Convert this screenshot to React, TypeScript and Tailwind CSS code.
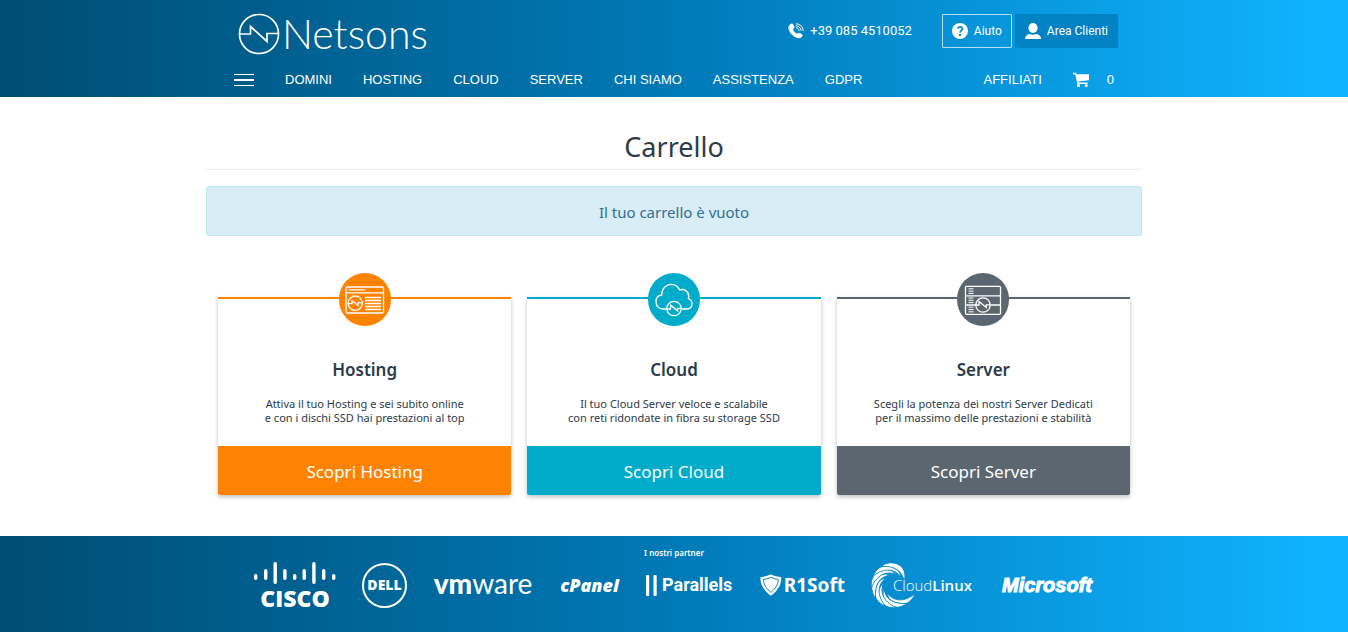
import type { ReactNode } from "react";

const BAND = "bg-[linear-gradient(to_right,#004d73_0%,#007ab8_51%,#10b3ff_98%,#10b3ff_100%)]";

function BrandLogo() {
  return (
    <a href="#home" aria-label="Netsons" className="flex items-center gap-0.5 pt-1.5 pl-2">
      <svg className="size-[42px]" viewBox="0 0 42 42" fill="none" stroke="#fff" strokeWidth="1.7" aria-hidden="true">
        <circle cx="21" cy="21" r="19.500" />
        <path d="M1.500 21H12.500V13.500L29 28.500V20.500H40.500" />
      </svg>
      <span className="font-['Lato'] text-[41px] leading-[40px] font-light">Netsons</span>
    </a>
  );
}

function PhoneIcon() {
  return (
    <svg className="size-4" viewBox="0 0 16 16" fill="none" aria-hidden="true">
      <path fill="#fff" d="M3.200.8C4 .3 4.700.5 5.200 1.400L6.300 3.500c.4.800.2 1.400-.4 1.900l-.8.7c.2 1.900 2.100 4.100 4 4.700l.9-.7c.6-.5 1.200-.5 1.900-.1l2 1.300c.9.6 1 1.300.4 2-.8 1.200-2 2-3.600 1.900C5.500 14.700.3 9 .4 4.300.4 2.800 1.700 1.600 3.200.8Z" />
      <path stroke="#fff" strokeWidth="1" strokeLinecap="round" d="M8.300 4.700c1.500.2 2.500 1.200 2.800 2.800M8.300 2.700c2.600.2 4.500 2.100 4.800 4.700M8.300.8c3.800.1 6.700 2.900 6.900 6.600" />
    </svg>
  );
}

function UserIcon() {
  return (
    <svg className="size-4" viewBox="0 0 16 16" fill="#fff" aria-hidden="true">
      <ellipse cx="8" cy="5" rx="4.600" ry="5" />
      <path d="M0 16c0-3 2-4.500 5-5 2 1 4 1 6 0 3 .5 5 2 5 5Z" />
    </svg>
  );
}

function HelpIcon() {
  return (
    <svg className="size-4" viewBox="0 0 16 16" fill="none" aria-hidden="true">
      <circle cx="8" cy="8" r="8" fill="#fff" />
      <path d="M5.800 5.600C6.200 3.200 10.400 3.300 10.300 5.900 10.200 7.500 8.100 7.700 8 9.600" stroke="#0890d6" strokeWidth="1.800" />
      <circle cx="8" cy="12" r="1.200" fill="#0890d6" />
    </svg>
  );
}

function CartIcon() {
  return (
    <svg className="h-[15px] w-4" viewBox="0 0 16 15" fill="#fff" aria-hidden="true">
      <path d="M0 .8h3.200l.4 1.500H16v6L5.300 9.600l.3 1H14.500V12H4.300L2.200 2.200H0Z" />
      <circle cx="5.500" cy="13.500" r="1.500" />
      <circle cx="13.300" cy="13.500" r="1.500" />
    </svg>
  );
}

const menu = ["DOMINI", "HOSTING", "CLOUD", "SERVER", "CHI SIAMO", "ASSISTENZA", "GDPR"];

function Header() {
  return (
    <header className={`${BAND} px-4 text-white`}>
      <div className="mx-auto max-w-[888px]">
        <div className="flex min-h-[62px] flex-wrap items-center justify-between">
          <BrandLogo />
          <div className="flex items-center font-['Roboto'] text-[12px] leading-4">
            <a href="tel:+390854510052" className="mr-[30px] flex items-center gap-1.5 text-[13px]">
              <PhoneIcon />
              +39 085 4510052
            </a>
            <a href="#aiuto" className="mr-[3px] flex h-[34px] items-center gap-1.5 rounded-[1px] border border-white/70 px-[9px]">
              <HelpIcon />
              Aiuto
            </a>
            <a href="#area-clienti" className="flex h-[34px] items-center gap-1.5 rounded-[1px] bg-[#0082c3] px-2.5">
              <UserIcon />
              Area Clienti
            </a>
          </div>
        </div>
        <nav className="flex min-h-[35px] items-center pl-1 text-[13px] leading-4">
          <button type="button" aria-label="Menu" className="mr-[31px] flex w-5 flex-col gap-1">
            <span className="h-px bg-white" />
            <span className="h-0.5 bg-white" />
            <span className="h-px bg-white" />
          </button>
          <ul className="flex gap-[31px]">
            {menu.map((m) => (
              <li key={m}>
                <a href="#menu">{m}</a>
              </li>
            ))}
          </ul>
          <div className="ml-auto flex items-center pr-1">
            <a href="#affiliati" className="mr-[31px]">AFFILIATI</a>
            <a href="#carrello" className="flex items-center gap-[18px]">
              <CartIcon />
              <span>0</span>
            </a>
          </div>
        </nav>
      </div>
    </header>
  );
}

function HostingArt() {
  return (
    <>
      <rect x="7" y="13.500" width="37.500" height="26" rx="1.500" />
      <path d="M7 19.300h37.500M9.500 16.400h17" />
      <circle cx="16.200" cy="29.700" r="7.200" />
      <path d="M9 30.200h4v-3l6 4.500v-2.500h4.200M26 24h16M26 27h16M26 30h16M26 33h16M26 36h16" />
    </>
  );
}

function CloudArt() {
  return (
    <>
      <path d="M19 35.500H14.500C10.500 35.300 8 32 8 28.200c0-3.700 2.300-6.300 5.800-6.700C13.500 15.500 17.800 11 23 10.800c4 0 7 2.200 8.600 5.600 4.500-1.500 9 1.400 9.200 6.200-.1 1-.2 1.700-.5 2.400 2.300 1 4 3 3.700 5.600-.3 2.800-2.500 4.900-5.500 4.900H33.500" />
      <circle cx="26" cy="35" r="7.200" />
      <path d="M18.800 35.500h3.700v-3.800l7.200 5.600v-2.500h3.500" />
    </>
  );
}

function ServerArt() {
  return (
    <>
      <path d="M9.500 12.800h33q1 0 1 1v26q0 1-1 1h-33q-1 0-1-1v-26q0-1 1-1ZM8.500 22.300h35M8.500 31.500H19M33.500 31.500h10" />
      <path strokeWidth="1" d="M11.500 15.300h5M11.500 17.600h5M11.500 19.900h5M11.500 24.500h5M11.500 26.800h5M11.500 29.100h5M11.500 33.700h5M11.500 36h5M11.500 38.300h5" />
      <circle cx="26" cy="31.500" r="7.200" fill="#5c6670" />
      <path d="M18.800 31.500H22v-3.600l7.200 6v-2.500h4" />
    </>
  );
}

type Plan = { name: string; lines: [string, string]; line: string; fill: string; art: ReactNode };

const plans: Plan[] = [
  {
    name: "Hosting",
    lines: ["Attiva il tuo Hosting e sei subito online", "e con i dischi SSD hai prestazioni al top"],
    line: "border-[#ff8303]",
    fill: "bg-[#ff8303]",
    art: <HostingArt />,
  },
  {
    name: "Cloud",
    lines: ["Il tuo Cloud Server veloce e scalabile", "con reti ridondate in fibra su storage SSD"],
    line: "border-[#00acca]",
    fill: "bg-[#00acca]",
    art: <CloudArt />,
  },
  {
    name: "Server",
    lines: ["Scegli la potenza dei nostri Server Dedicati", "per il massimo delle prestazioni e stabilità"],
    line: "border-[#5c6670]",
    fill: "bg-[#5c6670]",
    art: <ServerArt />,
  },
];

function PlanCard({ plan }: { plan: Plan }) {
  return (
    <article className={`flex flex-col items-center rounded-b-xs border-t-2 text-center shadow-[0_2px_4px_rgba(0,0,0,0.25)] ${plan.line}`}>
      <svg className={`-mt-[26px] h-[53px] w-[52px] rounded-full ${plan.fill}`} viewBox="0 0 52 52" fill="none" stroke="#fff" strokeWidth="1.300" aria-hidden="true">
        {plan.art}
      </svg>
      <h2 className="mt-8 text-[17px] leading-6 font-semibold">{plan.name}</h2>
      <p className="mt-[15px] mb-[21px] text-[11px] leading-[14px]">
        {plan.lines[0]}
        <br />
        {plan.lines[1]}
      </p>
      <a href="#scopri" className={`w-full rounded-b-xs pt-[13px] pb-[11px] text-[17px] leading-[25px] text-white ${plan.fill}`}>
        Scopri {plan.name}
      </a>
    </article>
  );
}

const bars = [
  [0, 12, 6], [10, 7, 11], [19.500, 0, 22], [29.200, 7, 11], [39, 12, 6], [48.500, 7, 11], [58.200, 0, 22], [68, 7, 11], [78, 12, 6],
];

function Cisco() {
  return (
    <div className="flex flex-col items-center">
      <svg className="h-[22px] w-[82px]" viewBox="0 0 82 22" fill="#fff" aria-hidden="true">
        {bars.map(([x, y, h]) => (
          <rect key={x} x={x} y={y} width="3.400" height={h} rx="1.700" />
        ))}
      </svg>
      <span className="mt-1 font-['Open_Sans'] text-[23px] leading-5 font-extrabold">CISCO</span>
    </div>
  );
}

function Shield() {
  return (
    <svg className="h-[22px] w-[22px]" viewBox="0 0 22 22" fill="none" aria-hidden="true">
      <path fill="#fff" d="M11 0c3.500 1.800 7 2.500 10.500 3.200C22 11 17.500 17 11 22 4.500 17 0 11 .5 3.200 4 2.500 7.500 1.800 11 0Z" />
      <path stroke="#0784c4" strokeWidth="1" d="M11 3.200c2.500 1.200 5 1.800 7.500 2.200C18.500 10.500 15.500 14.700 11 18.500 6.500 14.700 3.500 10.500 3.500 5.400 6 5 8.500 4.400 11 3.200Z" />
    </svg>
  );
}

function Swirl() {
  return (
    <svg className="h-[46px] w-[46px]" viewBox="-23 -23 46 46" fill="#fff" stroke="#058bcc" strokeWidth="0.9" aria-hidden="true">
      {[-186, -156, -126, -96, -66, -36, -6, 24].map((turn) => (
        <path key={turn} transform={`rotate(${turn})`} d="M-20-11C-13-24 5-25 8-7 2-17-9-18-20-11Z" />
      ))}
    </svg>
  );
}

function Footer() {
  return (
    <footer className={`${BAND} px-4 pt-[11px] pb-6 font-['Noto_Sans',sans-serif] text-white`}>
      <p className="text-center text-[8px] leading-[11px] font-semibold">I nostri partner</p>
      <ul className="mt-1 flex flex-wrap items-center justify-center gap-[26px] leading-none">
        <li className="w-[82px]"><Cisco /></li>
        <li className="flex size-[45px] items-center justify-center rounded-full border-2 border-white font-['Open_Sans'] text-[14px] font-extrabold">
          DELL
        </li>
        <li className="flex w-[100px] justify-center pb-1 font-['Lato'] text-[28px] leading-6">
          <b className="font-black">vm</b><span>ware</span>
        </li>
        <li className="flex w-[61px] justify-center font-['Open_Sans'] text-[18px] font-extrabold italic">cPanel</li>
        <li className="flex w-[88px] items-center gap-1">
          <svg className="h-[21px] w-3" viewBox="0 0 12 21" fill="#fff" aria-hidden="true">
            <rect x="0" width="3.200" height="21" rx="1" />
            <rect x="7.500" width="3.200" height="21" rx="1" />
          </svg>
          <span className="font-['Roboto'] text-[18px] font-bold">Parallels</span>
        </li>
        <li className="flex w-[85px] items-center gap-0.5">
          <Shield />
          <span className="text-[19px] font-bold">R1Soft</span>
        </li>
        <li className="flex w-[103px] items-center">
          <Swirl />
          <span className="-ml-6 font-['Open_Sans'] text-[15px] font-light">Cloud<span className="font-semibold">Linux</span></span>
        </li>
        <li className="flex w-[94px] justify-center font-['Liberation_Sans'] text-[20px] font-bold italic [-webkit-text-stroke:1px_white]">Microsoft</li>
      </ul>
    </footer>
  );
}

export default function App() {
  return (
    <div className="bg-white font-['Liberation_Sans',sans-serif]">
      <Header />
      <main className="mx-auto max-w-[936px] pt-[31px] pb-[41px] font-['Noto_Sans',sans-serif] text-[#2d3b49]">
        <h1 className="border-b border-[#eee] pb-[3px] text-center text-[27px] leading-[38px]">Carrello</h1>
        <p role="status" className="mt-4 rounded-[3px] border border-[#bce8f1] bg-[#d9edf7] pt-[13px] pb-[11px] text-center text-[15px] leading-6 text-[#31708f]">
          Il tuo carrello è vuoto
        </p>
        <section className="mt-[61px] grid grid-cols-1 gap-4 px-3 sm:grid-cols-3">
          {plans.map((p) => (
            <PlanCard key={p.name} plan={p} />
          ))}
        </section>
      </main>
      <Footer />
    </div>
  );
}
